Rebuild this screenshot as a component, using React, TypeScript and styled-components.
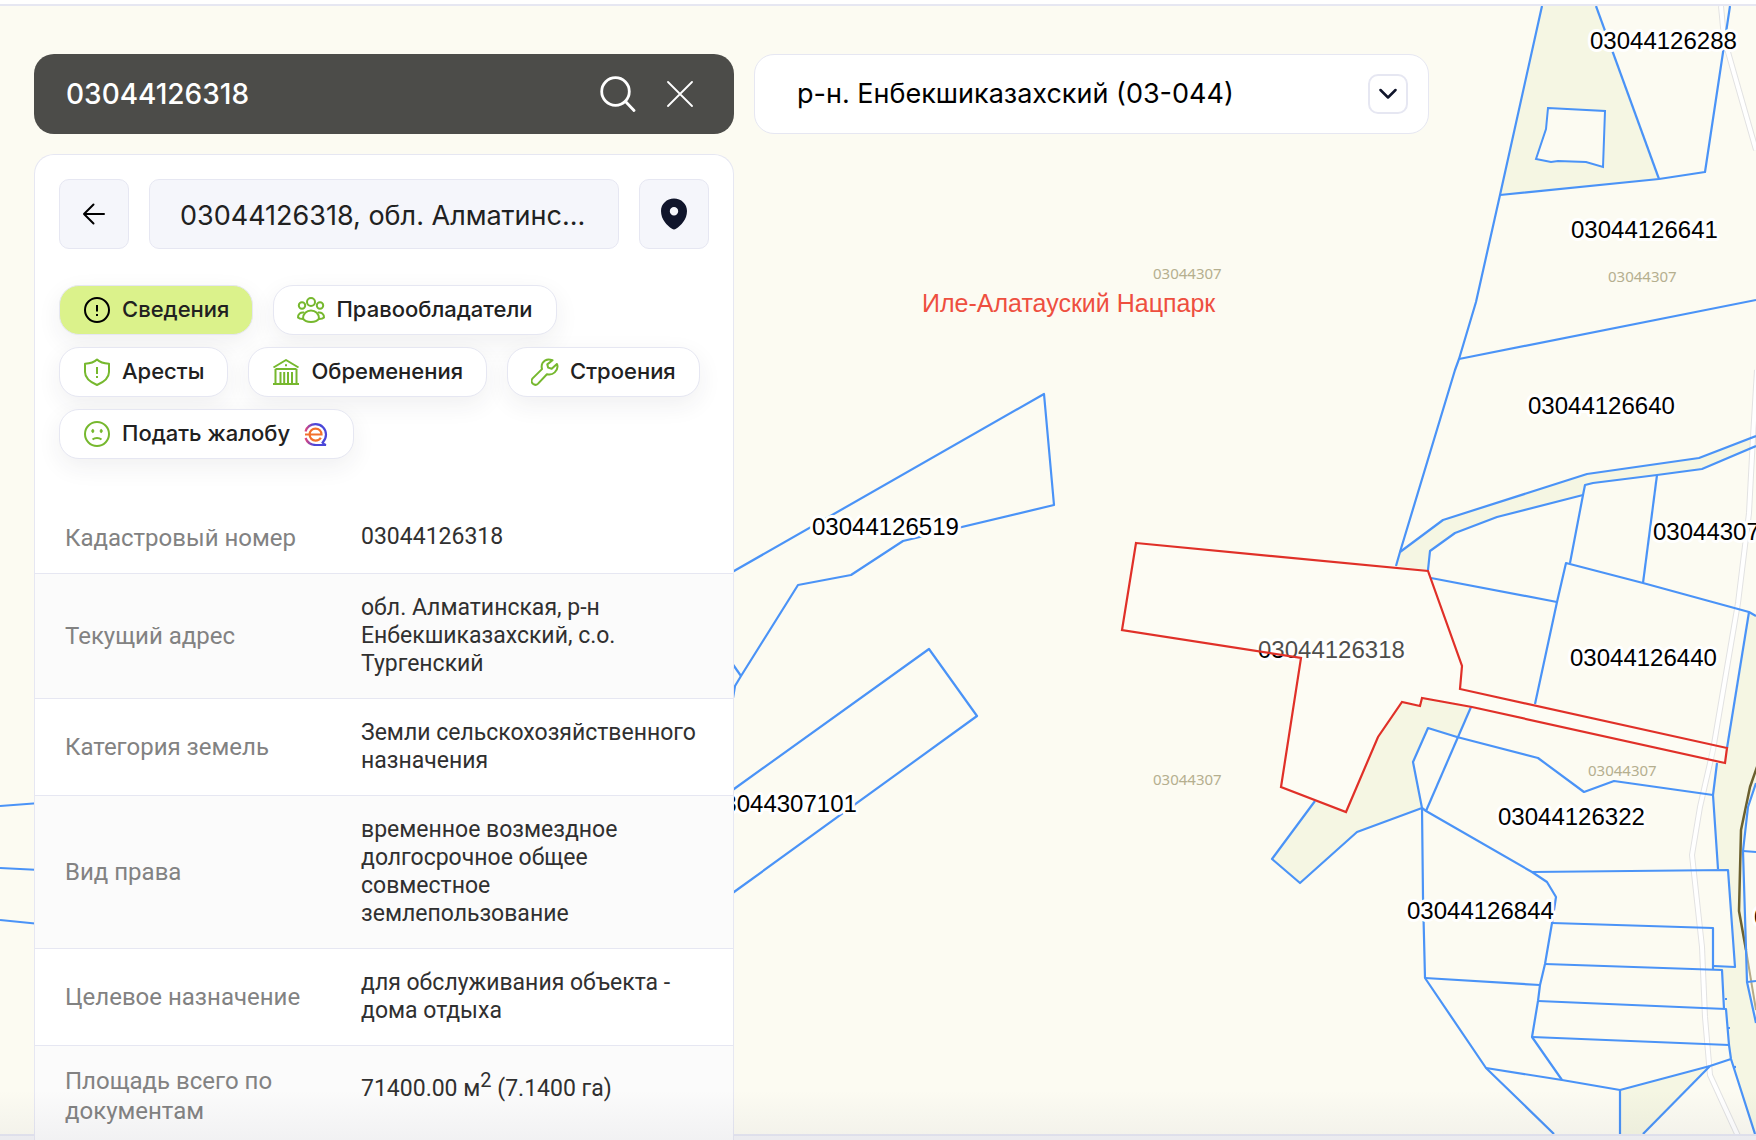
import React from 'react';
import styled, { createGlobalStyle } from 'styled-components';

const GlobalStyle = createGlobalStyle`
  *, *::before, *::after { box-sizing: border-box; }
  body { margin: 0; background: #ffffff; }
  button, input, select { font: inherit; color: inherit; }
`;

const uiFont = `Inter, "Liberation Sans", sans-serif`;
const tableFont = `Roboto, "Liberation Sans", sans-serif`;
const lineColor = '#e6e7f2';

const Page = styled.div`
  position: relative;
  height: 100vh;
  overflow: hidden;
  padding: 54px 34px 0;
  background: linear-gradient(#ffffff 50%, #f4f4f7 50%);
  font-family: ${uiFont};
  color: #212121;
`;

const MapFrame = styled.div`
  position: absolute;
  inset: 4px 0;
  border: solid ${lineColor};
  border-width: 2px 0;
  background: #fcfbf2;
`;

const MapSvg = styled.svg`
  display: block;
  width: 100%;
  height: 100%;
`;

const BottomShade = styled.div`
  position: absolute;
  inset: auto 0 0;
  height: 50px;
  background: linear-gradient(rgba(30, 30, 60, 0), rgba(30, 30, 60, 0.045));
  pointer-events: none;
`;

const Content = styled.div`
  position: relative;
  display: flex;
  align-items: flex-start;
  gap: 20px;
`;

const Sidebar = styled.div`
  flex: none;
  width: 700px;
  display: flex;
  flex-direction: column;
  gap: 20px;
`;

const SearchBar = styled.form`
  display: flex;
  align-items: center;
  gap: 22px;
  height: 80px;
  padding: 0 34px 0 32px;
  border-radius: 20px;
  background: #4c4c49;
  color: #ffffff;
`;

const SearchInput = styled.input`
  flex: 1;
  min-width: 0;
  padding: 0;
  border: 0;
  outline: 0;
  background: transparent;
  font-size: 28px;
  line-height: 36px;
  font-weight: 500;
`;

const IconButton = styled.button`
  display: flex;
  align-items: center;
  justify-content: center;
  width: 40px;
  height: 40px;
  padding: 0;
  border: 0;
  background: transparent;
  cursor: pointer;
`;

const Panel = styled.section`
  border: 1px solid ${lineColor};
  border-bottom: 0;
  border-radius: 20px 20px 0 0;
  background: #ffffff;
  overflow: hidden;
`;

const PanelHeader = styled.header`
  display: flex;
  gap: 20px;
  padding: 24px;
`;

const SquareButton = styled.button`
  flex: none;
  display: flex;
  align-items: center;
  justify-content: center;
  width: 70px;
  height: 70px;
  padding: 0;
  border: 1px solid ${lineColor};
  border-radius: 10px;
  background: #f5f6fb;
  cursor: pointer;
`;

const PanelTitle = styled.h1`
  flex: 1;
  min-width: 0;
  height: 70px;
  margin: 0;
  padding: 0 30px;
  border: 1px solid ${lineColor};
  border-radius: 10px;
  background: #f5f6fb;
  font-size: 27px;
  line-height: 72px;
  font-weight: 400;
  white-space: nowrap;
  overflow: hidden;
`;

const Tabs = styled.nav`
  display: flex;
  flex-wrap: wrap;
  gap: 12px 20px;
  padding: 12px 24px 44px;
`;

const Tab = styled.button<{ $active?: boolean }>`
  display: flex;
  align-items: center;
  gap: 10px;
  height: 50px;
  padding: 0 23px 2px 22px;
  border: 1px solid ${lineColor};
  border-radius: 20px;
  background: ${(p) => (p.$active ? '#dbf28b' : '#ffffff')};
  box-shadow: 0 8px 24px rgba(40, 40, 60, 0.07);
  font-size: 22px;
  line-height: 28px;
  font-weight: 500;
  cursor: pointer;
`;

const TabIcon = styled.span<{ $active?: boolean }>`
  display: flex;
  justify-content: center;
  width: 30px;
  padding-top: 2px;
  color: ${(p) => (p.$active ? '#000000' : '#76b82e')};
`;

const Details = styled.table`
  width: 100%;
  border-collapse: collapse;
  table-layout: fixed;
  font-family: ${tableFont};
`;

const DetailRow = styled.tr`
  & + & { border-top: 1px solid ${lineColor}; }
  &:nth-child(even) { background: #fbfbfb; }
`;

const DetailLabel = styled.th`
  width: 326px;
  padding: 20px 30px;
  text-align: left;
  vertical-align: middle;
  font-size: 24px;
  line-height: 30px;
  font-weight: 400;
  color: #828282;
`;

const DetailValue = styled.td`
  padding: 20px 30px 20px 0;
  vertical-align: top;
  font-size: 23px;
  line-height: 28px;
  color: #303030;

  sup { font-size: 20px; }
`;

const DistrictBox = styled.label`
  flex: 0 1 675px;
  display: grid;
  grid-template-columns: 1fr 40px 20px;
  align-items: center;
  height: 80px;
  border: 1px solid ${lineColor};
  border-radius: 20px;
  background: #ffffff;
  color: #000000;
`;

const DistrictSelect = styled.select`
  grid-area: 1 / 1 / 2 / 4;
  width: 100%;
  height: 100%;
  padding: 0 80px 0 42px;
  border: 0;
  border-radius: 20px;
  outline: 0;
  background: transparent;
  appearance: none;
  font-size: 27px;
  line-height: 36px;
`;

const Chevron = styled.span`
  grid-area: 1 / 2 / 2 / 3;
  display: flex;
  align-items: center;
  justify-content: center;
  height: 40px;
  border: 2px solid ${lineColor};
  border-radius: 10px;
  pointer-events: none;
`;

const ParcelLabel = styled.text`
  font: 24px "Liberation Sans", Arial, sans-serif;
  fill: #000000;
  stroke: #ffffff;
  stroke-width: 6px;
  stroke-linejoin: round;
  paint-order: stroke;
`;

const QuarterLabel = styled.text`
  font: 400 15px "Noto Sans", sans-serif;
  fill: #b5af8f;
`;

const ParkLabel = styled.text`
  font: 25px "Liberation Sans", Arial, sans-serif;
  fill: #ee4f3f;
`;

type IconName = 'info' | 'people' | 'shield' | 'bank' | 'wrench' | 'sad';

const iconShapes: Record<IconName, React.ReactNode> = {
  info: (
    <>
      <circle cx="14" cy="14" r="12" />
      <path d="M14 9v6.5M14 18v2" />
    </>
  ),
  people: (
    <>
      <circle cx="14" cy="6" r="4" />
      <circle cx="5" cy="9.500" r="3.200" />
      <circle cx="23" cy="9.500" r="3.200" />
      <path d="M6 22.500c0-4.500 3.300-8 8-8s8 3.500 8 8c-1.500 2.500-4.500 3.500-8 3.500s-6.500-1-8-3.500z" />
      <path d="M7 16.500c-3.500-.5-6 1.500-6 5 1.200 1.300 3 1.500 5 1.500M21 16.500c3.500-.5 6 1.500 6 5-1.200 1.300-3 1.500-5 1.500" />
    </>
  ),
  shield: (
    <>
      <path d="M14 1.500c2.500 2.500 7 4 12 4.300v8.200c0 6-5 10-12 13-7-3-12-7-12-13V5.800C7 5.500 11.500 4 14 1.500z" />
      <path d="M14 9v7M14 18v2" />
    </>
  ),
  bank: (
    <>
      <path d="M1.500 9.500 14 2l12.500 7.500" />
      <path d="M3.500 11h21M1 26h26M3.500 11v15M24.500 11v15M8.500 14v12M12.200 14v12M16 14v12M20 14v12M13 7.200h2" />
    </>
  ),
  wrench: (
    <path d="M21.500 2.200c-3.800-1.400-7.800-.5-9.800 2.600-1.300 2-1.300 4-.7 6.300L1.600 20.400c-1.400 1.600-1.200 4 .3 5.400 1.500 1.300 3.700 1.300 5.200-.2l8.800-9.400c2.800.8 5.600.3 7.800-1.800 2.600-2.600 3.600-5.300 2.200-8.400l-5.200 4.800-3.600-1.200-.8-3.200z" />
  ),
  sad: (
    <>
      <circle cx="14" cy="14" r="12" />
      <path d="M9.500 19.500c2.500-2 6.500-2 9 0" />
      <ellipse cx="9.800" cy="11" rx="1" ry="1.600" fill="currentColor" strokeWidth="1" />
      <ellipse cx="18.200" cy="11" rx="1" ry="1.600" fill="currentColor" strokeWidth="1" />
    </>
  ),
};

function Icon({ name }: { name: IconName }) {
  return (
    <svg width="28" height="28" viewBox="0 0 28 28" fill="none" stroke="currentColor" strokeWidth="2" strokeLinejoin="round" aria-hidden="true">
      {iconShapes[name]}
    </svg>
  );
}

function EotinishLogo() {
  return (
    <svg width="30" height="24" viewBox="-4 -1 30 24" fill="none" strokeWidth="2.2" aria-hidden="true">
      <defs>
        <linearGradient id="eoRing" x1="0" y1="0" x2="1" y2="0">
          <stop offset="0" stopColor="#e0457b" />
          <stop offset=".4" stopColor="#4a46d8" />
        </linearGradient>
      </defs>
      <path d="M1.500 8.500C3 4 7 1.200 11.500 1.200c6 0 10.500 4.500 10.500 10.400 0 3.500-1.400 6-3.400 8 .8 1.200 1.800 2 3.400 2.400H12C7 22 3 19 1.500 15" stroke="url(#eoRing)" />
      <path d="M1 11.500h16.500C17.500 8 15 5.600 11.500 5.600c-3.300 0-5.900 2.600-5.900 6s2.600 6 5.900 6c2.300 0 4.200-1 5.300-2.900" stroke="#f2702c" />
    </svg>
  );
}

const tabs: { icon: IconName; title: string; logo?: boolean }[] = [
  { icon: 'info', title: 'Сведения' },
  { icon: 'people', title: 'Правообладатели' },
  { icon: 'shield', title: 'Аресты' },
  { icon: 'bank', title: 'Обременения' },
  { icon: 'wrench', title: 'Строения' },
  { icon: 'sad', title: 'Подать жалобу', logo: true },
];

const details: [string, React.ReactNode][] = [
  ['Кадастровый номер', '03044126318'],
  ['Текущий адрес', 'обл. Алматинская, р-н Енбекшиказахский, с.о. Тургенский'],
  ['Категория земель', 'Земли сельскохозяйственного назначения'],
  ['Вид права', 'временное возмездное долгосрочное общее совместное землепользование'],
  ['Целевое назначение', 'для обслуживания объекта - дома отдыха'],
  ['Площадь всего по документам', <>71400.00 м<sup>2</sup> (7.1400 га)</>],
];

const scrubAreas = [
  '1542,6 1596,6 1659,179 1500,195',
  '1396,566 1400,552 1443,520 1587,474 1699,458 1756,436 1756,446 1702,469 1657,475 1593,483 1585,485 1583,495 1497,517 1455,533 1430,551 1428,570',
  '1422,698 1471,707 1458,737 1428,728 1413,762 1422,808 1357,832 1300,883 1272,859 1315,801 1346,812 1378,737 1402,702 1420,706',
  '1620,1090 1710,1066 1643,1134 1620,1134',
  '1749,612 1756,616 1756,783 1748,807 1743,851 1747,982 1756,1023 1756,1134 1731,1059 1729,1045 1726,1009 1722,970 1714,970 1714,966 1735,967 1728,870 1718,869 1713,795 1717,763 1725,763 1727,748',
];

const parcelLines = [
  '1542,6 1500,195 1476,302 1459,359 1455,370 1400,552 1396,566',
  '1596,6 1659,179',
  '1500,195 1659,179 1705,172 1730,6',
  '1459,359 1756,300',
  '1400,552 1443,520 1587,474 1699,458 1756,436',
  '1756,446 1702,469 1657,475 1593,483 1585,485 1583,495 1570,563',
  '1583,495 1497,517 1455,533 1430,551 1428,570',
  '1657,475 1643,583',
  '1535,704 1557,602 1566,563 1643,583 1749,612 1756,616',
  '1431,578 1557,602',
  '1749,612 1727,748',
  '1471,707 1426,811',
  '1315,801 1272,859 1300,883 1357,832 1422,808 1413,762 1428,728 1457,737 1538,758 1584,792 1614,781 1713,795',
  '1717,763 1713,795 1718,869',
  '1422,808 1426,811 1532,872 1547,882 1556,897 1552,923 1545,964 1540,985 1538,1001 1532,1037 1562,1080',
  '1532,872 1728,870 1735,967 1714,966',
  '1552,923 1713,928 1713,970',
  '1545,964 1722,970 1724,1009',
  '1538,1001 1726,1009 1729,1045 1731,1059 1755,1134',
  '1532,1037 1729,1045',
  '1422,808 1423,897 1425,978 1486,1068 1554,1134',
  '1425,978 1540,985',
  '1486,1068 1562,1080 1620,1090 1620,1134',
  '1620,1090 1710,1066 1731,1059',
  '1710,1066 1643,1134',
  '1756,783 1748,807 1743,851 1747,982 1756,1023',
  '1743,851 1756,852',
  '1747,982 1756,981',
  '1725,999 1727,999',
  '1728,1028 1730,1028',
  '1733,1067 1736,1067',
  '700,591 734,571 1044,394 1054,505 903,541 851,575 798,585 741,676 735,686 733,698',
  '727,656 741,676',
  '700,813 734,789 929,649 977,716 734,892 700,917',
  '0,806 40,803',
  '0,868 40,870',
  '0,920 40,924',
];

const parcelLabels: [string, number, number][] = [
  ['03044126288', 1590, 49],
  ['03044126641', 1571, 238],
  ['03044126640', 1528, 414],
  ['03044307', 1653, 540],
  ['03044126440', 1570, 666],
  ['03044126322', 1498, 825],
  ['03044126844', 1407, 919],
  ['03044126519', 812, 535],
  ['03044307101', 710, 812],
  ['03044126318', 1258, 658],
  ['0', 1754, 925],
];

const quarterLabels: [number, number][] = [
  [1153, 279],
  [1608, 282],
  [1588, 776],
  [1153, 785],
];

const roads = ['1721,6 1724,38 1756,150', '1757,370 1753,437 1749,513 1738,603 1713,750 1700,807 1692,855 1702,947 1705,1017 1710,1075 1738,1136'];

const selectedParcel =
  '1136,543 1428,571 1462,666 1460,689 1727,748 1725,763 1472,707 1422,698 1420,706 1402,702 1378,737 1346,812 1281,787 1301,658 1122,630';

function CadastreMap() {
  return (
    <MapSvg viewBox="0 6 1756 1128" preserveAspectRatio="xMinYMin slice" role="img" aria-label="Карта">
      {scrubAreas.map((points) => (
        <polygon key={points} points={points} fill="#f5f6e3" />
      ))}
      <polygon points="1548,108 1605,111 1603,167 1586,162 1558,161 1551,162 1536,159 1546,129" fill="#fcfbf2" stroke="#4a93f7" strokeWidth="2" />
      <g fill="none" strokeLinejoin="round">
        {roads.map((points) => (
          <g key={points}>
            <polyline points={points} stroke="#e2e2e2" strokeWidth="6" />
            <polyline points={points} stroke="#ffffff" strokeWidth="4" />
          </g>
        ))}
        <polyline points="1746,950 1756,1010" stroke="#b5ab87" strokeWidth="2" />
        <polyline points="1758,764 1750,787 1741,830 1739,911 1746,950" stroke="#6b602f" strokeWidth="2.5" />
        {parcelLines.map((points) => (
          <polyline key={points} points={points} stroke="#4a93f7" strokeWidth="2.2" />
        ))}
      </g>
      {quarterLabels.map(([x, y]) => (
        <QuarterLabel key={`${x}-${y}`} x={x} y={y}>03044307</QuarterLabel>
      ))}
      <ParkLabel x="922" y="312">Иле-Алатауский Нацпарк</ParkLabel>
      {parcelLabels.map(([text, x, y]) => (
        <ParcelLabel key={`${x}-${y}`} x={x} y={y}>{text}</ParcelLabel>
      ))}
      <polygon points={selectedParcel} fill="#fffff8" fillOpacity=".3" stroke="#e03028" strokeWidth="2.2" />
    </MapSvg>
  );
}

export default function App() {
  return (
    <Page>
      <GlobalStyle />
      <MapFrame>
        <CadastreMap />
      </MapFrame>
      <Content>
        <Sidebar>
          <SearchBar onSubmit={(e) => e.preventDefault()}>
            <SearchInput aria-label="Поиск" defaultValue="03044126318" />
            <IconButton type="submit" aria-label="Найти">
              <svg width="36" height="36" viewBox="0 0 36 36" fill="none" stroke="#fff" strokeWidth="2.800" strokeLinecap="round">
                <circle cx="15.500" cy="15.500" r="13.800" />
                <path d="m25.500 25.500 8.500 9" />
              </svg>
            </IconButton>
            <IconButton type="button" aria-label="Очистить">
              <svg width="26" height="26" viewBox="0 0 26 26" fill="none" stroke="#fff" strokeWidth="1.800" strokeLinecap="round">
                <path d="m1 1 24 24M25 1 1 25" />
              </svg>
            </IconButton>
          </SearchBar>
          <Panel>
            <PanelHeader>
              <SquareButton type="button" aria-label="Назад">
                <svg width="24" height="24" viewBox="0 0 24 24" fill="none" stroke="#000" strokeWidth="2" strokeLinecap="round" strokeLinejoin="round">
                  <path d="M22 12H2M11.500 2.500 2 12l9.500 9.500" />
                </svg>
              </SquareButton>
              <PanelTitle>03044126318, обл. Алматинс...</PanelTitle>
              <SquareButton type="button" aria-label="Показать на карте">
                <svg width="26" height="32" viewBox="0 0 26 32">
                  <path fillRule="evenodd" fill="#10152b" d="M13 .5C5.800.5 0 6 0 13c0 8.500 6 14.500 11 17.800 1.300.9 2.700.9 4 0C20 27.500 26 21.500 26 13 26 6 20.200.5 13 .5zm0 8.500a4.200 4.200 0 1 1 0 8.400A4.200 4.200 0 0 1 13 9z" />
                </svg>
              </SquareButton>
            </PanelHeader>
            <Tabs aria-label="Разделы">
              {tabs.map((tab, i) => (
                <Tab key={tab.title} type="button" $active={i === 0}>
                  <TabIcon $active={i === 0}><Icon name={tab.icon} /></TabIcon>
                  {tab.title}
                  {tab.logo && <TabIcon><EotinishLogo /></TabIcon>}
                </Tab>
              ))}
            </Tabs>
            <Details>
              <tbody>
                {details.map(([label, value]) => (
                  <DetailRow key={label}>
                    <DetailLabel scope="row">{label}</DetailLabel>
                    <DetailValue>{value}</DetailValue>
                  </DetailRow>
                ))}
              </tbody>
            </Details>
          </Panel>
        </Sidebar>
        <DistrictBox>
          <DistrictSelect aria-label="Район" defaultValue="03-044">
            <option value="03-044">р-н. Енбекшиказахский (03-044)</option>
          </DistrictSelect>
          <Chevron>
            <svg width="18" height="12" viewBox="0 0 18 12" fill="none" stroke="#10152b" strokeWidth="2.500" strokeLinecap="round" strokeLinejoin="round">
              <path d="m1.500 2 7.500 7.500L16.500 2" />
            </svg>
          </Chevron>
        </DistrictBox>
      </Content>
      <BottomShade />
    </Page>
  );
}
